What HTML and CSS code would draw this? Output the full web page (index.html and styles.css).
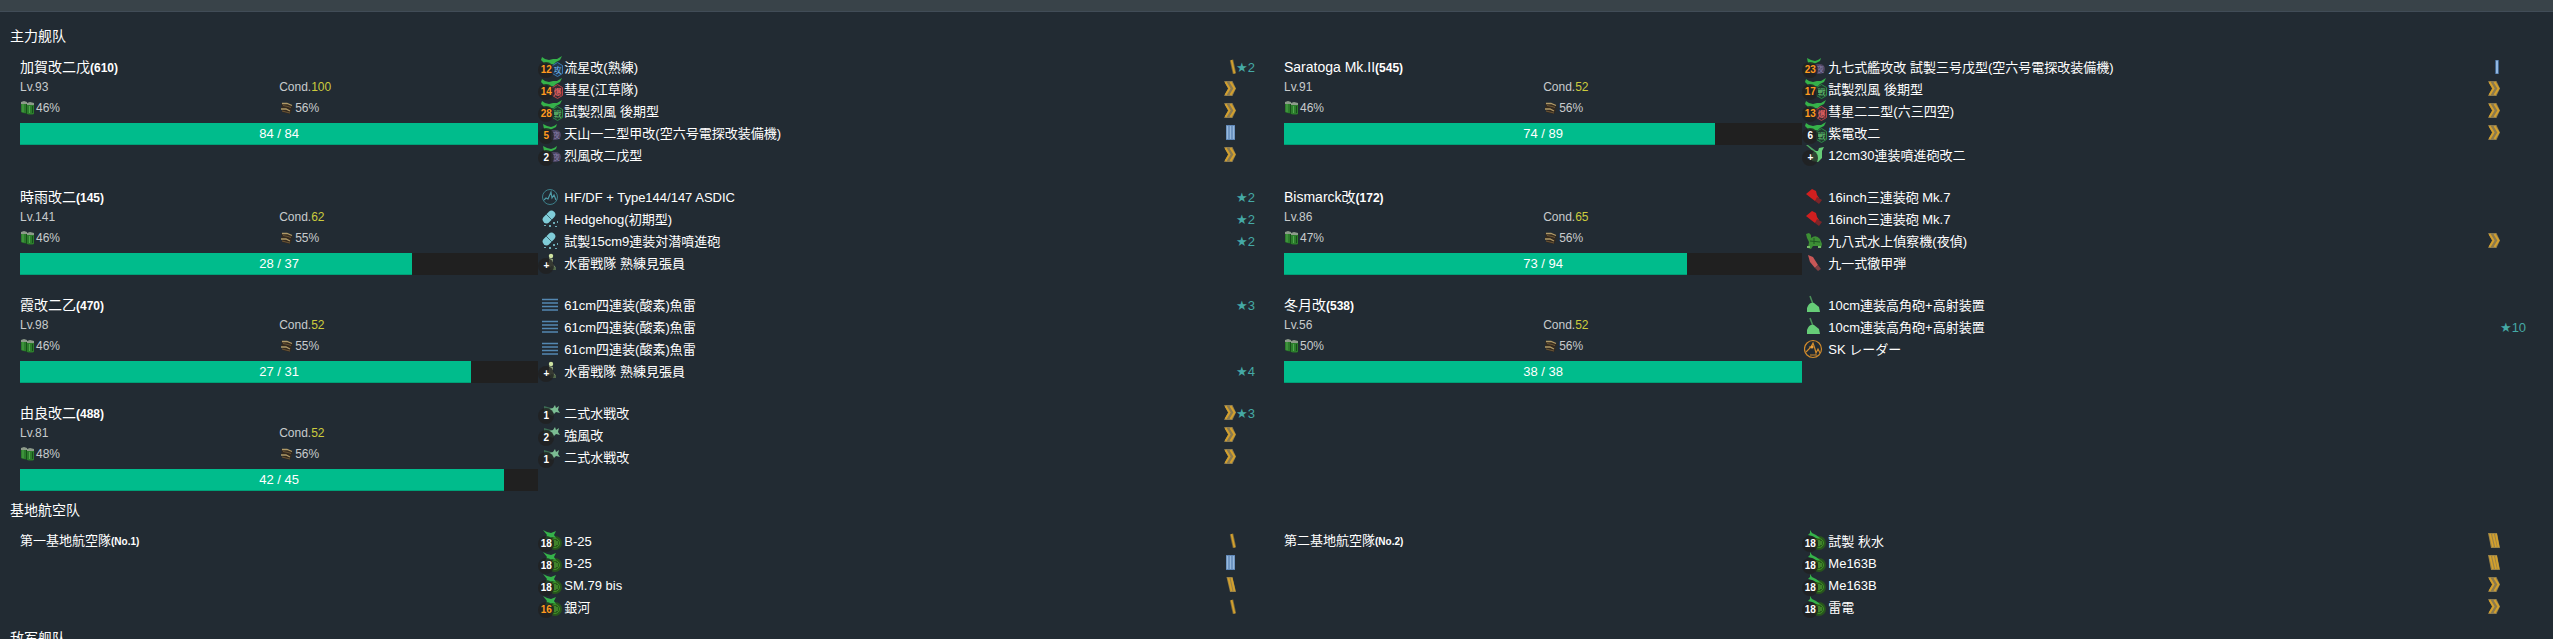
FILE: index.html
```
<!DOCTYPE html>
<html lang="ja">
<head>
<meta charset="utf-8">
<title>主力舰队</title>
<link rel="stylesheet" href="styles.css">
</head>
<body>
<svg class="sprite" aria-hidden="true">
  <symbol id="plane" viewBox="0 0 24 22">
    <path fill="#35b24a" d="M2 1l3 2 4 1 4-1 4 0 5-3-2 4-4 2-2 2-4 1-3-2-3 1-1-2-2-2z"/>
  </symbol>
  <symbol id="torpedo-bomber" viewBox="0 0 24 22">
    <use href="#plane"/>
    <path fill="#23374a" stroke="#3a78b4" d="M17.500 6.500l5 3v8l-5 3-5-3v-8z"/>
    <text x="13.500" y="16.500" fill="#6db6f2">攻</text>
  </symbol>
  <symbol id="dive-bomber" viewBox="0 0 24 22">
    <use href="#plane"/>
    <path fill="#3b2c33" stroke="#b8434a" d="M17.500 6.500l5 3v8l-5 3-5-3v-8z"/>
    <text x="13.500" y="16.500" fill="#ff6b6b">爆</text>
  </symbol>
  <symbol id="fighter" viewBox="0 0 24 22">
    <use href="#plane"/>
    <path fill="#20392f" stroke="#2b8a45" d="M17.500 6.500l5 3v8l-5 3-5-3v-8z"/>
    <text x="13.500" y="16.500" fill="#66cc77">戦</text>
  </symbol>
  <symbol id="night-plane" viewBox="0 0 24 22">
    <path fill="#35b24a" d="M3 2l4 2 4 1 3-1 3-2-1 3-4 2-4 1-4-1z"/>
    <path fill="#4a4462" d="M11 8h5a5 5 0 0 1 0 10h-5z"/>
    <text x="12" y="16" fill="#8079a3">夜</text>
  </symbol>
  <symbol id="land-attacker" viewBox="0 0 24 22">
    <circle cx="15" cy="13" r="7" fill="#28551d"/>
    <circle cx="15" cy="13" r="4.500" fill="none" stroke="#3f9423"/>
    <path d="M15 10v6M17 11v4" stroke="#5bb33a"/>
    <path fill="#35b24a" d="M3 0l4 2 4 1 5-2-2 4 2 3-4-1-4 2-3 0 2-4z"/>
  </symbol>
  <symbol id="interceptor" viewBox="0 0 24 22">
    <circle cx="15" cy="13" r="7" fill="#28551d"/>
    <circle cx="15" cy="13" r="4.500" fill="none" stroke="#3f9423"/>
    <path d="M15 10v6M17 11v4" stroke="#5bb33a"/>
    <path fill="#35b24a" d="M6 0l2 3 4 2 4 3-4 0-4-2-4-1 2-2z"/>
  </symbol>
  <symbol id="seaplane-fighter" viewBox="0 0 24 22">
    <path fill="#3b6b52" d="M4 4l7 2 4 3-2 5-5-2-4-3z"/>
    <path fill="#7bbd93" d="M9 7l4-1 2-3 1 3 3-2-1 4 2 3-4-1-2 2-2-3z"/>
  </symbol>
  <symbol id="rocket" viewBox="0 0 24 22">
    <path fill="#4fa763" d="M2 1l2 0 8 6-1 2z"/>
    <path fill="#66cc77" d="M10 7l4 0 1-3 5-1-2 4 0 7-4 4-6-1-1-5z"/>
  </symbol>
  <symbol id="sonar" viewBox="0 0 24 22">
    <circle cx="10" cy="11" r="7.500" fill="none" stroke="#3c7f8a"/>
    <path d="M4 14l2-2 2 1 3-7 1 6 2-3 2 5" fill="none" stroke="#4f9aa6" stroke-width="1.200"/>
  </symbol>
  <symbol id="depth-charge" viewBox="0 0 24 22">
    <path d="M6.500 11.500l5-5" stroke="#7fccd8" stroke-width="7.500" stroke-linecap="round"/>
    <path d="M6 6l6 6" stroke="#3a6670"/>
    <path fill="#6cabb5" d="M4 17h2v1H4zM9 17h2v2H9zM13 14h2v2h-2zM15 18h2v1h-2zM17 13h1v2h-1z"/>
  </symbol>
  <symbol id="lookout" viewBox="0 0 24 22">
    <circle cx="11" cy="4" r="2.200" fill="#cfe3a2"/>
    <path fill="#8c9f78" d="M9 6l4 1 0 5 3 4-3 2-3-3-3 1-1-3 3-3z"/>
    <path fill="#52684a" d="M11 14l5 1 0 3-6 0z"/>
  </symbol>
  <symbol id="torpedo" viewBox="0 0 24 22">
    <path d="M2 5.500h16M2 9h16M2 12.500h16M2 16h16" stroke="#5488b2" stroke-width="1.600"/>
  </symbol>
  <symbol id="main-gun" viewBox="0 0 24 22">
    <path fill="#d01f1f" d="M2 8l6-5 4 2 1 4 2 3-4 3-4-3z"/>
    <path fill="#7c2529" d="M13 11l5 3-3 4-4-3z"/>
  </symbol>
  <symbol id="recon" viewBox="0 0 24 22">
    <path fill="#3d8f35" d="M2 4l3-1 2 2v3q5-4 9 1l2 5-1 4-3-2-5 0-2 3-3-1 1-6-2-4z"/>
    <path d="M6 11l10 1M10 8l0 6" stroke="#1e5723"/>
    <path fill="#75bb68" d="M3 16h3v2H3zM14 16h3v2h-3z"/>
  </symbol>
  <symbol id="ap-shell" viewBox="0 0 24 22">
    <path fill="#c95757" d="M4 3l5 2 5 8-3 3-5-6z"/>
    <path fill="#813f43" d="M14 13l3 4-3 2-3-3z"/>
  </symbol>
  <symbol id="aa-gun" viewBox="0 0 24 22">
    <path d="M6 2l3 8" stroke="#4b8f5a" stroke-width="1.500"/>
    <path fill="#66cc77" d="M3 18l0-4q2-6 7-5l5 4 1 5z"/>
  </symbol>
  <symbol id="radar" viewBox="0 0 24 22">
    <circle cx="9" cy="11" r="8.500" fill="none" stroke="#d08a2c" stroke-width="1.200"/>
    <path d="M2 14l5-5 2-4 2 6 1 4 2-4 2 4M5 9l4-1M6 17h7" fill="none" stroke="#d08a2c" stroke-width="1.200"/>
    <circle cx="8" cy="9" r="1.500" fill="#f0a23a"/>
  </symbol>
  <symbol id="fuel" viewBox="0 0 16 16">
    <path fill="#2c7d2c" d="M1 3h6v10q-3 1-6-1zM7 4h7v10q-3 1-7 0z"/>
    <path d="M3 4v8M9.500 6v7" stroke="#50a84c"/>
    <path d="M6.500 4v10M12.500 6v7" stroke="#174f1b"/>
    <path fill="#8d9b8a" d="M1 2l3-1 3 1v2H1zM7 3l3-1 4 1v2H7z"/>
  </symbol>
  <symbol id="ammo" viewBox="0 0 16 16">
    <path fill="#33291e" d="M2 3l10 1 2 3-2 2 1 1-2 4-8-2 0-2-1-2 1-2z"/>
    <path fill="none" stroke="#b09a68" stroke-width="1.300" d="M3 3.500l5 0 5 2M2 9l5 0 4 2"/>
    <path fill="none" stroke="#6b5636" d="M4 5.500l5 1 3 1M3 11l4 1 4 1"/>
  </symbol>
  <symbol id="rank-1" viewBox="0 0 12 16">
    <path d="M9 1v14" stroke="#41658f" stroke-width="4"/><path d="M9 1.500v13" stroke="#92b8e2" stroke-width="2"/>
  </symbol>
  <symbol id="rank-3" viewBox="0 0 12 16">
    <path fill="#5f87b6" d="M2 0h9v15H2z"/><path d="M3.500 1v13M6.500 1v13M9.500 1v13" stroke="#96b8dd" stroke-width="1.600"/>
  </symbol>
  <symbol id="rank-4" viewBox="0 0 12 16">
    <path d="M7.500 1l3 13.500" stroke="#7d6b3a" stroke-width="3.500"/><path d="M7.500 1l3 13.500" stroke="#d3a02d" stroke-width="1.800"/>
  </symbol>
  <symbol id="rank-5" viewBox="0 0 12 16">
    <path fill="#9a8347" d="M2.500 0h6L12 15H6z"/><path d="M4.500 1l3 13M7.500 1l3 13" stroke="#d3a02d" stroke-width="1.800"/>
  </symbol>
  <symbol id="rank-6" viewBox="0 0 12 16">
    <path fill="#9a8347" d="M0 0h9l3 15H3z"/><path d="M2 1l3 13M5 1l3 13M8 1l2.500 13" stroke="#d3a02d" stroke-width="1.800"/>
  </symbol>
  <symbol id="rank-7" viewBox="0 0 12 16">
    <path fill="#8a7a50" d="M0 0h8.500L12 7.500 8.500 15H0l4-7.500z"/><path d="M1.500 1l4 6.500-4 6.500M6.500 1l4 6.500-4 6.500" fill="none" stroke="#d3a02d" stroke-width="2"/>
  </symbol>
</svg>

<div class="page">
  <div class="topbar"></div>
  <main class="report">
    <h2 class="fleet-title" lang="zh-CN">主力舰队</h2>
    <section class="fleet">
      <article class="ship">
        <div class="info">
          <h3 class="name">加賀改二戊<small>(610)</small></h3>
          <div class="pair level"><span>Lv.93</span><span>Cond.<b>100</b></span></div>
          <div class="pair supply"><span><svg><use href="#fuel"/></svg>46%</span><span><svg><use href="#ammo"/></svg>56%</span></div>
          <div class="hp"><div class="fill" style="width:100%"></div><span>84 / 84</span></div>
        </div>
        <ul class="items">
          <li><span class="icon"><svg><use href="#torpedo-bomber"/></svg><i class="count low">12</i></span><span class="label">流星改(熟練)</span><svg class="rank"><use href="#rank-4"/></svg><span class="star">★2</span></li>
          <li><span class="icon"><svg><use href="#dive-bomber"/></svg><i class="count low">14</i></span><span class="label">彗星(江草隊)</span><svg class="rank"><use href="#rank-7"/></svg><span class="star"></span></li>
          <li><span class="icon"><svg><use href="#fighter"/></svg><i class="count low">28</i></span><span class="label">試製烈風 後期型</span><svg class="rank"><use href="#rank-7"/></svg><span class="star"></span></li>
          <li><span class="icon"><svg><use href="#night-plane"/></svg><i class="count low">5</i></span><span class="label">天山一二型甲改(空六号電探改装備機)</span><svg class="rank"><use href="#rank-3"/></svg><span class="star"></span></li>
          <li><span class="icon"><svg><use href="#night-plane"/></svg><i class="count">2</i></span><span class="label">烈風改二戊型</span><svg class="rank"><use href="#rank-7"/></svg><span class="star"></span></li>
        </ul>
      </article>
      <article class="ship">
        <div class="info">
          <h3 class="name">Saratoga Mk.II<small>(545)</small></h3>
          <div class="pair level"><span>Lv.91</span><span>Cond.<b>52</b></span></div>
          <div class="pair supply"><span><svg><use href="#fuel"/></svg>46%</span><span><svg><use href="#ammo"/></svg>56%</span></div>
          <div class="hp"><div class="fill" style="width:83.15%"></div><span>74 / 89</span></div>
        </div>
        <ul class="items">
          <li><span class="icon"><svg><use href="#night-plane"/></svg><i class="count low">23</i></span><span class="label">九七式艦攻改 試製三号戊型(空六号電探改装備機)</span><svg class="rank"><use href="#rank-1"/></svg><span class="star"></span></li>
          <li><span class="icon"><svg><use href="#fighter"/></svg><i class="count low">17</i></span><span class="label">試製烈風 後期型</span><svg class="rank"><use href="#rank-7"/></svg><span class="star"></span></li>
          <li><span class="icon"><svg><use href="#dive-bomber"/></svg><i class="count low">13</i></span><span class="label">彗星二二型(六三四空)</span><svg class="rank"><use href="#rank-7"/></svg><span class="star"></span></li>
          <li><span class="icon"><svg><use href="#fighter"/></svg><i class="count">6</i></span><span class="label">紫電改二</span><svg class="rank"><use href="#rank-7"/></svg><span class="star"></span></li>
          <li><span class="icon"><svg><use href="#rocket"/></svg><i class="count">+</i></span><span class="label">12cm30連装噴進砲改二</span></li>
        </ul>
      </article>
      <article class="ship">
        <div class="info">
          <h3 class="name">時雨改二<small>(145)</small></h3>
          <div class="pair level"><span>Lv.141</span><span>Cond.<b>62</b></span></div>
          <div class="pair supply"><span><svg><use href="#fuel"/></svg>46%</span><span><svg><use href="#ammo"/></svg>55%</span></div>
          <div class="hp"><div class="fill" style="width:75.68%"></div><span>28 / 37</span></div>
        </div>
        <ul class="items">
          <li><span class="icon"><svg><use href="#sonar"/></svg></span><span class="label">HF/DF + Type144/147 ASDIC</span><span class="star">★2</span></li>
          <li><span class="icon"><svg><use href="#depth-charge"/></svg></span><span class="label">Hedgehog(初期型)</span><span class="star">★2</span></li>
          <li><span class="icon"><svg><use href="#depth-charge"/></svg></span><span class="label">試製15cm9連装対潜噴進砲</span><span class="star">★2</span></li>
          <li><span class="icon"><svg><use href="#lookout"/></svg><i class="count">+</i></span><span class="label">水雷戦隊 熟練見張員</span></li>
        </ul>
      </article>
      <article class="ship">
        <div class="info">
          <h3 class="name">Bismarck改<small>(172)</small></h3>
          <div class="pair level"><span>Lv.86</span><span>Cond.<b>65</b></span></div>
          <div class="pair supply"><span><svg><use href="#fuel"/></svg>47%</span><span><svg><use href="#ammo"/></svg>56%</span></div>
          <div class="hp"><div class="fill" style="width:77.66%"></div><span>73 / 94</span></div>
        </div>
        <ul class="items">
          <li><span class="icon"><svg><use href="#main-gun"/></svg></span><span class="label">16inch三連装砲 Mk.7</span></li>
          <li><span class="icon"><svg><use href="#main-gun"/></svg></span><span class="label">16inch三連装砲 Mk.7</span></li>
          <li><span class="icon"><svg><use href="#recon"/></svg></span><span class="label">九八式水上偵察機(夜偵)</span><svg class="rank"><use href="#rank-7"/></svg><span class="star"></span></li>
          <li><span class="icon"><svg><use href="#ap-shell"/></svg></span><span class="label">九一式徹甲弾</span></li>
        </ul>
      </article>
      <article class="ship">
        <div class="info">
          <h3 class="name">霞改二乙<small>(470)</small></h3>
          <div class="pair level"><span>Lv.98</span><span>Cond.<b>52</b></span></div>
          <div class="pair supply"><span><svg><use href="#fuel"/></svg>46%</span><span><svg><use href="#ammo"/></svg>55%</span></div>
          <div class="hp"><div class="fill" style="width:87.1%"></div><span>27 / 31</span></div>
        </div>
        <ul class="items">
          <li><span class="icon"><svg><use href="#torpedo"/></svg></span><span class="label">61cm四連装(酸素)魚雷</span><span class="star">★3</span></li>
          <li><span class="icon"><svg><use href="#torpedo"/></svg></span><span class="label">61cm四連装(酸素)魚雷</span></li>
          <li><span class="icon"><svg><use href="#torpedo"/></svg></span><span class="label">61cm四連装(酸素)魚雷</span></li>
          <li><span class="icon"><svg><use href="#lookout"/></svg><i class="count">+</i></span><span class="label">水雷戦隊 熟練見張員</span><span class="star">★4</span></li>
        </ul>
      </article>
      <article class="ship">
        <div class="info">
          <h3 class="name">冬月改<small>(538)</small></h3>
          <div class="pair level"><span>Lv.56</span><span>Cond.<b>52</b></span></div>
          <div class="pair supply"><span><svg><use href="#fuel"/></svg>50%</span><span><svg><use href="#ammo"/></svg>56%</span></div>
          <div class="hp"><div class="fill" style="width:100%"></div><span>38 / 38</span></div>
        </div>
        <ul class="items">
          <li><span class="icon"><svg><use href="#aa-gun"/></svg></span><span class="label">10cm連装高角砲+高射装置</span></li>
          <li><span class="icon"><svg><use href="#aa-gun"/></svg></span><span class="label">10cm連装高角砲+高射装置</span><span class="star">★10</span></li>
          <li><span class="icon"><svg><use href="#radar"/></svg></span><span class="label">SK レーダー</span></li>
        </ul>
      </article>
      <article class="ship">
        <div class="info">
          <h3 class="name">由良改二<small>(488)</small></h3>
          <div class="pair level"><span>Lv.81</span><span>Cond.<b>52</b></span></div>
          <div class="pair supply"><span><svg><use href="#fuel"/></svg>48%</span><span><svg><use href="#ammo"/></svg>56%</span></div>
          <div class="hp"><div class="fill" style="width:93.33%"></div><span>42 / 45</span></div>
        </div>
        <ul class="items">
          <li><span class="icon"><svg><use href="#seaplane-fighter"/></svg><i class="count">1</i></span><span class="label">二式水戦改</span><svg class="rank"><use href="#rank-7"/></svg><span class="star">★3</span></li>
          <li><span class="icon"><svg><use href="#seaplane-fighter"/></svg><i class="count">2</i></span><span class="label">強風改</span><svg class="rank"><use href="#rank-7"/></svg><span class="star"></span></li>
          <li><span class="icon"><svg><use href="#seaplane-fighter"/></svg><i class="count">1</i></span><span class="label">二式水戦改</span><svg class="rank"><use href="#rank-7"/></svg><span class="star"></span></li>
        </ul>
      </article>
    </section>

    <h2 class="fleet-title" lang="zh-CN">基地航空队</h2>
    <section class="fleet">
      <article class="ship">
        <div class="info">
          <h3 class="name base">第一基地航空隊<small>(No.1)</small></h3>
        </div>
        <ul class="items">
          <li><span class="icon"><svg><use href="#land-attacker"/></svg><i class="count">18</i></span><span class="label">B-25</span><svg class="rank"><use href="#rank-4"/></svg><span class="star"></span></li>
          <li><span class="icon"><svg><use href="#land-attacker"/></svg><i class="count">18</i></span><span class="label">B-25</span><svg class="rank"><use href="#rank-3"/></svg><span class="star"></span></li>
          <li><span class="icon"><svg><use href="#land-attacker"/></svg><i class="count">18</i></span><span class="label">SM.79 bis</span><svg class="rank"><use href="#rank-5"/></svg><span class="star"></span></li>
          <li><span class="icon"><svg><use href="#land-attacker"/></svg><i class="count low">16</i></span><span class="label">銀河</span><svg class="rank"><use href="#rank-4"/></svg><span class="star"></span></li>
        </ul>
      </article>
      <article class="ship">
        <div class="info">
          <h3 class="name base">第二基地航空隊<small>(No.2)</small></h3>
        </div>
        <ul class="items">
          <li><span class="icon"><svg><use href="#interceptor"/></svg><i class="count">18</i></span><span class="label">試製 秋水</span><svg class="rank"><use href="#rank-6"/></svg><span class="star"></span></li>
          <li><span class="icon"><svg><use href="#interceptor"/></svg><i class="count">18</i></span><span class="label">Me163B</span><svg class="rank"><use href="#rank-6"/></svg><span class="star"></span></li>
          <li><span class="icon"><svg><use href="#interceptor"/></svg><i class="count">18</i></span><span class="label">Me163B</span><svg class="rank"><use href="#rank-7"/></svg><span class="star"></span></li>
          <li><span class="icon"><svg><use href="#interceptor"/></svg><i class="count">18</i></span><span class="label">雷電</span><svg class="rank"><use href="#rank-7"/></svg><span class="star"></span></li>
        </ul>
      </article>
    </section>

    <h2 class="fleet-title" lang="zh-CN">敌军舰队</h2>
  </main>
</div>
</body>
</html>
```

FILE: styles.css
```
* {
  box-sizing: border-box;
}

body {
  margin: 0;
  background: #222b33;
  color: #fff;
  font-family: "Liberation Sans", "Noto Sans CJK JP", sans-serif;
  font-size: 13px;
}

.sprite {
  display: none;
}

.sprite text {
  font-size: 8px;
}

.page {
  height: 100vh;
  overflow: hidden;
}

.topbar {
  height: 12px;
  background: #394349;
  border-bottom: 1px solid #414c57;
}

.report {
  padding: 14px 15px 0 10px;
}

.fleet-title {
  margin: 0;
  font-family: "Liberation Sans", "Noto Sans CJK SC", sans-serif;
  font-size: 14px;
  font-weight: 400;
  line-height: 20px;
}

.fleet {
  display: grid;
  grid-template-columns: 1fr 1fr;
}

.ship {
  display: grid;
  grid-template-columns: 5fr 7fr;
  align-items: start;
  padding: 10px 10px 9px;
}

.name {
  margin: 0;
  font-size: 14px;
  font-weight: 400;
  line-height: 22px;
}

.name small {
  font-size: 12px;
  font-weight: 700;
  line-height: 1;
}

.name.base {
  font-size: 13px;
}

.name.base small {
  font-size: 10px;
}

.pair {
  display: grid;
  grid-template-columns: 1fr 1fr;
  color: #c8cbcd;
  font-size: 12px;
}

.level {
  line-height: 18px;
}

.level b {
  color: #cccc3d;
  font-weight: 400;
}

.supply {
  line-height: 24px;
}

.supply span {
  display: flex;
  align-items: center;
}

.supply svg {
  width: 16px;
  height: 16px;
}

.hp {
  position: relative;
  height: 22px;
  margin-top: 3px;
  background: #202020;
  line-height: 21px;
  text-align: center;
}

.hp .fill {
  position: absolute;
  inset: 0 auto 0 0;
  background: #00bc8c;
  box-shadow: inset 0 -1px 0 rgba(0, 0, 0, 0.15);
}

.hp span {
  position: relative;
}

.items {
  margin: 0;
  padding: 0 0 1px;
  list-style: none;
}

.items li {
  display: flex;
  align-items: center;
  height: 22px;
}

.icon {
  position: relative;
  width: 26px;
  height: 22px;
  padding-left: 2px;
}

.icon svg {
  display: block;
  width: 24px;
  height: 22px;
}

.count {
  position: absolute;
  left: 0;
  top: 6px;
  width: 16px;
  height: 16px;
  border-radius: 50%;
  background: rgba(32, 32, 32, 0.8);
  font-size: 10px;
  font-style: normal;
  font-weight: 700;
  line-height: 16px;
  text-align: center;
}

.count.low {
  color: #ff9a1f;
}

.label {
  flex: 1;
  line-height: 21px;
}

.rank {
  width: 12px;
  height: 16px;
}

.star {
  width: 28px;
  color: #45a9a5;
  font-family: "Liberation Sans", "DejaVu Sans", sans-serif;
  line-height: 21px;
}
```
